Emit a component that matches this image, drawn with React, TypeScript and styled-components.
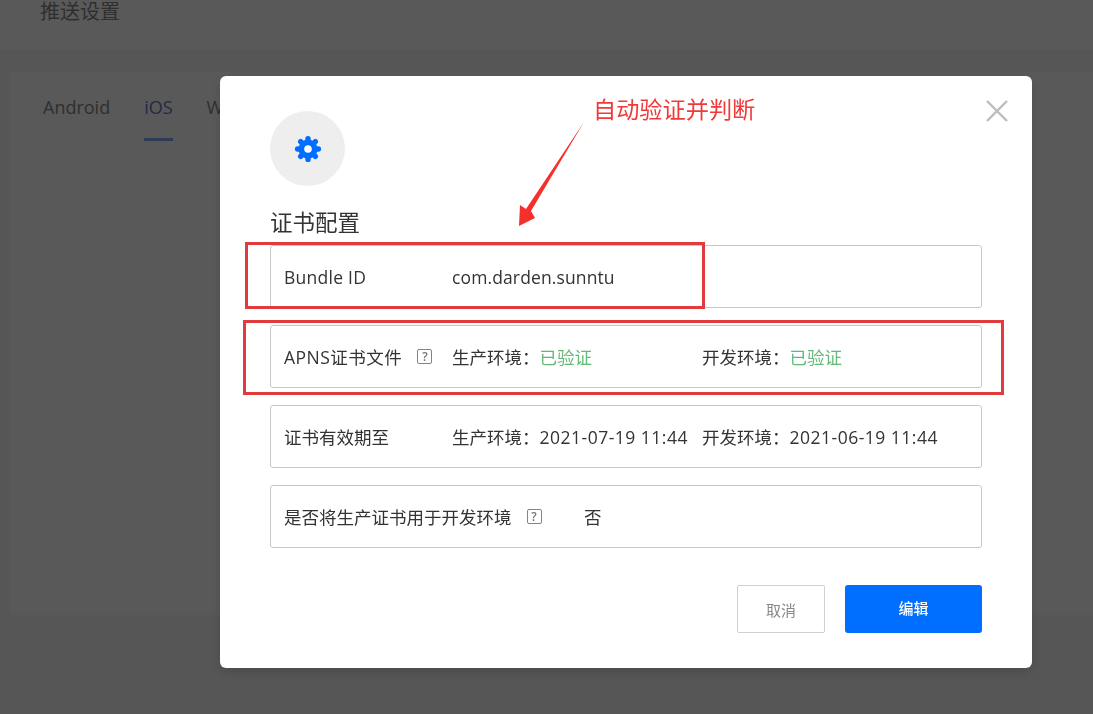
import { FC, ReactNode } from 'react';
import styled, { createGlobalStyle } from 'styled-components';

const FONT = '"Open Sans", "Noto Sans CJK SC", sans-serif';

const GlobalStyle = createGlobalStyle`
  html, body {
    margin: 0;
    height: 100%;
    overflow: hidden;
    background: #f5f5f5;
    font-family: ${FONT};
  }
`;

type RowProps = {
  label: string;
  labelWidth?: number;
  labelSpacing?: number;
  hasHelp?: boolean;
  children: ReactNode;
};

const ConfigRow: FC<RowProps> = ({ label, labelWidth = 168, labelSpacing = 0, hasHelp, children }) => (
  <Row>
    <RowLabel $width={labelWidth} $spacing={labelSpacing}>
      {label}
      {hasHelp && <HelpIcon>?</HelpIcon>}
    </RowLabel>
    {children}
  </Row>
);

const GearIcon: FC = () => (
  <svg width="28" height="28" viewBox="0 0 28 28">
    <g stroke="#006eff" strokeWidth="5.4" strokeLinecap="round">
      <line x1="14" y1="3.6" x2="14" y2="24.4" />
      <line x1="3.6" y1="14" x2="24.4" y2="14" />
      <line x1="6.65" y1="6.65" x2="21.35" y2="21.35" />
      <line x1="21.35" y1="6.65" x2="6.65" y2="21.35" />
    </g>
    <circle cx="14" cy="14" r="9.5" fill="#006eff" />
    <circle cx="14" cy="14" r="3.8" fill="#fff" />
  </svg>
);

const App: FC = () => (
  <>
    <GlobalStyle />
    <Header>推送设置</Header>
    <Card>
      <Tabs>
        <Tab>Android</Tab>
        <Tab $active>iOS</Tab>
        <Tab>Web</Tab>
      </Tabs>
    </Card>
    <Overlay>
      <Modal>
        <CloseIcon viewBox="0 0 22 22">
          <path d="M1 1 L21 21 M21 1 L1 21" stroke="#bdbdbd" strokeWidth="2.4" fill="none" />
        </CloseIcon>
        <IconCircle>
          <GearIcon />
        </IconCircle>
        <Title>证书配置</Title>
        <Rows>
          <ConfigRow label="Bundle ID" labelSpacing={0.25}>
            <Value $spacing={0.12}>com.darden.sunntu</Value>
          </ConfigRow>
          <ConfigRow label="APNS证书文件" labelSpacing={0.5} hasHelp>
            <Value>
              生产环境：<Verified>已验证</Verified>
            </Value>
            <Value>
              开发环境：<Verified>已验证</Verified>
            </Value>
          </ConfigRow>
          <ConfigRow label="证书有效期至">
            <Value>
              生产环境：<DateText>2021-07-19 11:44</DateText>
            </Value>
            <Value>
              开发环境：<DateText>2021-06-19 11:44</DateText>
            </Value>
          </ConfigRow>
          <ConfigRow label="是否将生产证书用于开发环境" labelWidth={300} hasHelp>
            <Value>否</Value>
          </ConfigRow>
        </Rows>
        <Footer>
          <CancelButton>取消</CancelButton>
          <EditButton>编辑</EditButton>
        </Footer>

        <AnnotationText>自动验证并判断</AnnotationText>
        <AnnotationArrow viewBox="0 0 70 110">
          <polygon points="66,1 13,90 17,97 1,105 2,84 8,88" fill="#f5302c" />
        </AnnotationArrow>
        <AnnotationBoxTop />
        <AnnotationBoxBottom />
      </Modal>
    </Overlay>
  </>
);

export default App;

const Header = styled.div`
  height: 50px;
  padding-left: 40px;
  background: #fff;
  color: #888;
  font-size: 20px;
  line-height: 23px;
`;

const Card = styled.div`
  height: 543px;
  box-sizing: border-box;
  margin: 22px 0 0 10px;
  padding: 20px 33px 0;
  background: #fff;
`;

const Tabs = styled.div`
  display: flex;
  gap: 34px;
`;

const Tab = styled.div<{ $active?: boolean }>`
  height: 49px;
  box-sizing: border-box;
  padding-top: 1px;
  color: ${({ $active }) => ($active ? '#6080c8' : '#888')};
  font-size: 18px;
  line-height: 28px;
  border-bottom: 3px solid ${({ $active }) => ($active ? '#86a8f0' : 'transparent')};
`;

const Overlay = styled.div`
  position: fixed;
  inset: 0;
  padding: 76px 0 0 220px;
  background: rgba(0, 0, 0, 0.65);
`;

const Modal = styled.div`
  position: relative;
  width: 812px;
  height: 592px;
  box-sizing: border-box;
  padding: 35px 50px 0;
  background: #fff;
  border-radius: 6px;
  box-shadow: 0 4px 12px rgba(0, 0, 0, 0.15);
`;

const CloseIcon = styled.svg`
  position: absolute;
  top: 24px;
  right: 24px;
  width: 22px;
  height: 22px;
`;

const IconCircle = styled.div`
  display: flex;
  align-items: center;
  justify-content: center;
  width: 75px;
  height: 75px;
  border-radius: 50%;
  background: #eee;
`;

const Title = styled.div`
  margin-top: 20px;
  color: #333;
  font-size: 22.5px;
  line-height: 34px;
`;

const Rows = styled.div`
  display: flex;
  flex-direction: column;
  gap: 17px;
  margin-top: 5px;
`;

const Row = styled.div`
  display: flex;
  align-items: center;
  width: 712px;
  height: 63px;
  box-sizing: border-box;
  padding-left: 13px;
  border: 1px solid #c8c8c8;
  border-radius: 3px;
  color: #333;
  font-size: 17.5px;
`;

const RowLabel = styled.div<{ $width: number; $spacing: number }>`
  display: flex;
  align-items: center;
  flex: none;
  width: ${({ $width }) => $width}px;
  letter-spacing: ${({ $spacing }) => $spacing}px;
`;

const HelpIcon = styled.span`
  display: flex;
  align-items: center;
  justify-content: center;
  width: 15px;
  height: 15px;
  box-sizing: border-box;
  margin-left: 15px;
  border: 1.5px solid #7d868c;
  border-radius: 2px;
  color: #6f787e;
  font-size: 12px;
  font-weight: 600;
  letter-spacing: 0;
  line-height: 1;
`;

const Value = styled.div<{ $spacing?: number }>`
  flex: none;
  width: 250px;
  white-space: nowrap;
  letter-spacing: ${({ $spacing = 0 }) => $spacing}px;
`;

const DateText = styled.span`
  letter-spacing: 0.5px;
`;

const Verified = styled.span`
  color: #63ba78;
`;

const Footer = styled.div`
  display: flex;
  justify-content: flex-end;
  gap: 20px;
  margin-top: 37px;
`;

const CancelButton = styled.button`
  width: 88px;
  height: 48px;
  padding: 0;
  background: #fff;
  border: 1px solid #d0d0d0;
  border-radius: 2px;
  color: #888;
  font-family: ${FONT};
  font-size: 15px;
`;

const EditButton = styled.button`
  width: 137px;
  height: 48px;
  padding: 0 0 4px;
  background: #006eff;
  border: none;
  border-radius: 3px;
  color: #fff;
  font-family: ${FONT};
  font-size: 15px;
  font-weight: 500;
`;

const AnnotationText = styled.div`
  position: absolute;
  top: 15px;
  left: 373px;
  color: #f03a3a;
  font-size: 23.2px;
  line-height: 36px;
  white-space: nowrap;
`;

const AnnotationArrow = styled.svg`
  position: absolute;
  top: 45px;
  left: 298px;
  width: 70px;
  height: 110px;
`;

const AnnotationBoxTop = styled.div`
  position: absolute;
  top: 166px;
  left: 25px;
  width: 460px;
  height: 67px;
  box-sizing: border-box;
  border: 3px solid #e23b3f;
`;

const AnnotationBoxBottom = styled.div`
  position: absolute;
  top: 244px;
  left: 23px;
  width: 761px;
  height: 75px;
  box-sizing: border-box;
  border: 3px solid #e23b3f;
`;
